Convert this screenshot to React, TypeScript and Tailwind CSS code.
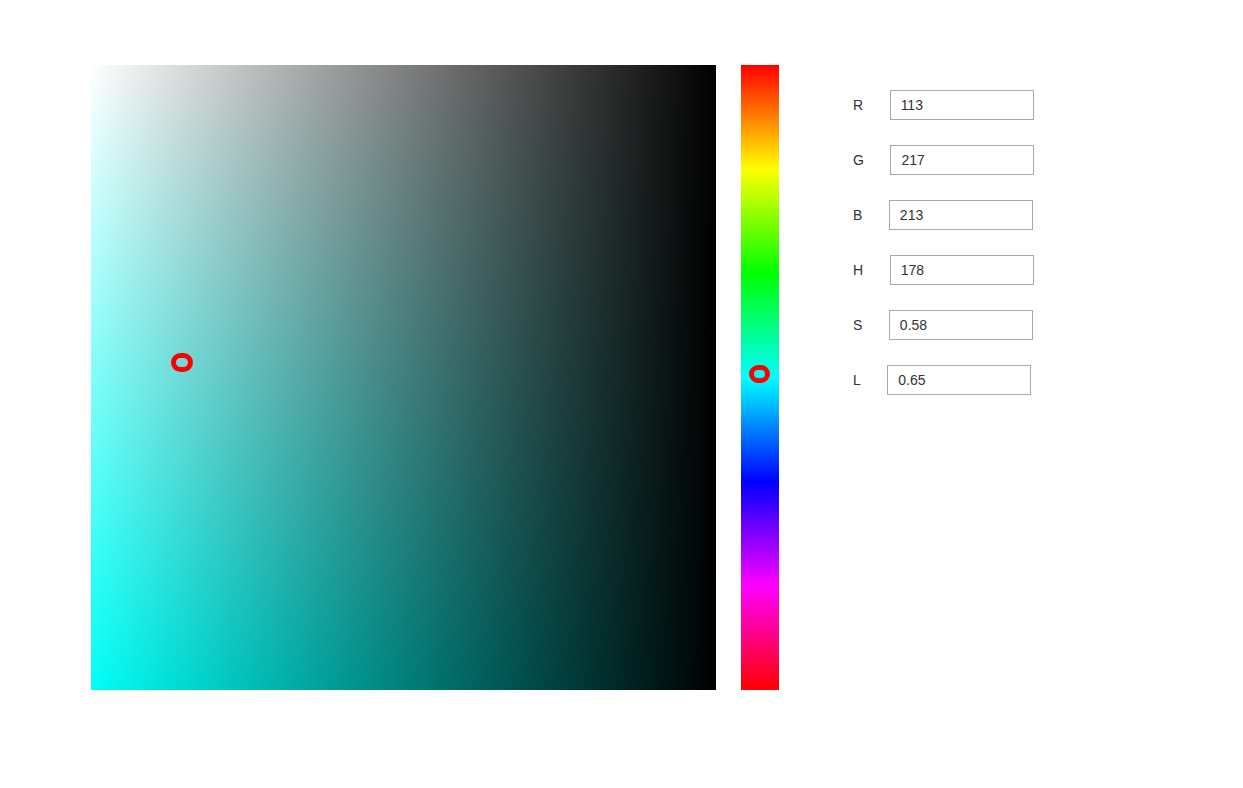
import React from 'react';

const fields = [
  { label: 'R', value: '113' },
  { label: 'G', value: '217' },
  { label: 'B', value: '213' },
  { label: 'H', value: '178' },
  { label: 'S', value: '0.58' },
  { label: 'L', value: '0.65' },
];

export default function App() {
  return (
    <div className="min-h-[788px] bg-white pl-[91px] pt-[65px] font-['Liberation_Sans',Arial,sans-serif]">
      <div className="flex items-start">
        {/* saturation / lightness square */}
        <div className="relative h-[625px] w-[625px] bg-[hsl(178,100%,50%)]">
          <div className="absolute inset-0 bg-gradient-to-b from-white to-transparent" />
          <div className="absolute inset-0 bg-gradient-to-r from-transparent to-black" />
          <div className="absolute left-[80px] top-[288px] h-[19px] w-[22px] rounded-full border-[5px] border-[#ff0000]" />
        </div>

        {/* hue strip */}
        <div className="relative ml-[25px] h-[625px] w-[38px] bg-[linear-gradient(to_bottom,#ff0000,#ffff00,#00ff00,#00ffff,#0000ff,#ff00ff,#ff0000)]">
          <div className="absolute left-[8px] top-[300px] h-[18px] w-[21px] rounded-full border-[5px] border-[#ff0000]" />
        </div>

        {/* value fields */}
        <div className="ml-[74px] flex flex-col gap-[25px] pt-[25px]">
          {fields.map((f) => (
            <div key={f.label} className="flex h-[30px] items-center">
              <span className="mr-[26.5px] text-[14px] text-[#333]">{f.label}</span>
              <input
                readOnly
                value={f.value}
                className="h-[30px] w-[144px] border border-[#a9a9a9] px-[10px] text-[14px] text-[#333] outline-none"
              />
            </div>
          ))}
        </div>
      </div>
    </div>
  );
}
